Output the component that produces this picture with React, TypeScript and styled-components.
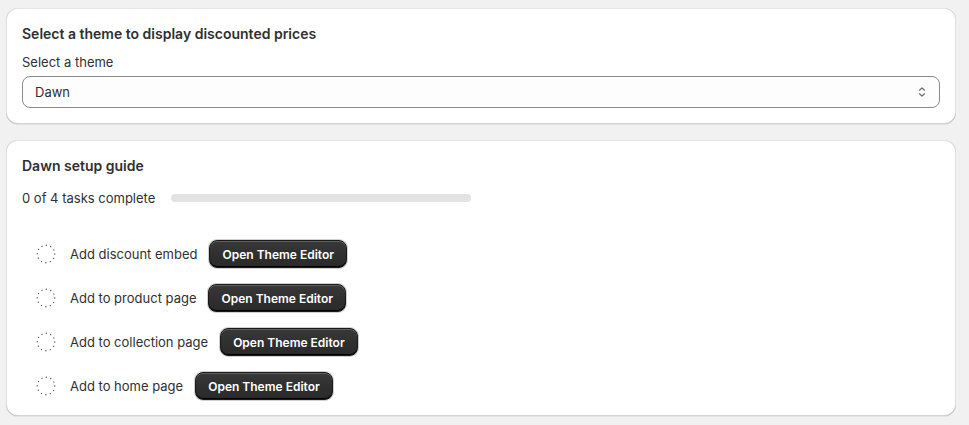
import React from "react";
import styled, { createGlobalStyle } from "styled-components";

const GlobalStyle = createGlobalStyle`
  body {
    margin: 0;
    background: #f1f1f1;
    font-family: Inter, "Noto Sans", sans-serif;
    color: #303030;
    -webkit-font-smoothing: antialiased;
  }
`;

const Page = styled.div`
  display: flex;
  flex-direction: column;
  gap: 16px;
  padding: 8px 13px 8px 6px;
`;

const Card = styled.section`
  background: #ffffff;
  border-radius: 12px;
  padding: 16px;
  box-shadow: 0 1px 0 0 rgba(26, 26, 26, 0.07), 0 1px 0 0 rgba(204, 204, 204, 0.5) inset,
    0 -1px 0 0 rgba(0, 0, 0, 0.17) inset, -1px 0 0 0 rgba(0, 0, 0, 0.13) inset,
    1px 0 0 0 rgba(0, 0, 0, 0.13) inset;
  display: flex;
  flex-direction: column;
`;

const Title = styled.h2<{ $gap: number }>`
  margin: 0 0 ${(p) => p.$gap}px;
  font-size: 14px;
  line-height: 20px;
  font-weight: 600;
`;

const Label = styled.label`
  font-size: 13px;
  line-height: 20px;
  margin-bottom: 4px;
`;

const SelectBox = styled.div`
  height: 32px;
  box-sizing: border-box;
  border: 1px solid #8a8a8a;
  border-radius: 8px;
  background: #fdfdfd;
  display: flex;
  align-items: center;
  justify-content: space-between;
  padding: 0 8px 0 12px;
  font-size: 13px;
`;

const Progress = styled.div`
  display: flex;
  align-items: center;
  gap: 16px;
  font-size: 13px;
  line-height: 20px;
`;

const Track = styled.div`
  width: 300px;
  height: 8px;
  border-radius: 4px;
  background: #e3e3e3;
`;

const TaskList = styled.ul`
  list-style: none;
  margin: 32px 0 0;
  padding: 0 0 0 12px;
  display: flex;
  flex-direction: column;
  gap: 16px;
`;

const Task = styled.li`
  display: flex;
  align-items: center;
  height: 28px;
  font-size: 13px;
`;

const IconBox = styled.span`
  width: 24px;
  height: 24px;
  display: flex;
  align-items: center;
  justify-content: center;
  margin-right: 12px;
`;

const TaskName = styled.span`
  margin-right: 12px;
`;

const DarkButton = styled.button`
  height: 28px;
  padding: 0 12px;
  border: 1px solid #1a1a1a;
  border-radius: 8px;
  background: linear-gradient(180deg, #383838 0%, #303030 50%, #2a2a2a 100%);
  color: #ffffff;
  font-family: inherit;
  font-size: 12px;
  font-weight: 600;
  box-shadow: 0 1px 0 0 rgba(255, 255, 255, 0.2) inset, 0 -1px 0 0 #000 inset,
    0 0 0 1px rgba(120, 120, 120, 0.35);
  cursor: pointer;
`;

const DottedCircle = () => (
  <svg width="20" height="20" viewBox="0 0 20 20">
    <circle
      cx="10"
      cy="10"
      r="8.75"
      fill="none"
      stroke="#5a5a5a"
      strokeWidth="1.4"
      strokeLinecap="round"
      strokeDasharray="0.01 4.58"
    />
  </svg>
);

const Chevrons = () => (
  <svg width="18" height="18" viewBox="0 0 16 16">
    <path
      d="M5.8 6.4 8 4.3l2.2 2.1M5.8 9.6 8 11.7l2.2-2.1"
      fill="none"
      stroke="#6a6a6a"
      strokeWidth="1.1"
      strokeLinecap="round"
      strokeLinejoin="round"
    />
  </svg>
);

const tasks = [
  "Add discount embed",
  "Add to product page",
  "Add to collection page",
  "Add to home page",
];

export default function App() {
  return (
    <>
      <GlobalStyle />
      <Page>
        <Card>
          <Title $gap={8}>Select a theme to display discounted prices</Title>
          <Label>Select a theme</Label>
          <SelectBox>
            <span>Dawn</span>
            <Chevrons />
          </SelectBox>
        </Card>
        <Card>
          <Title $gap={12}>Dawn setup guide</Title>
          <Progress>
            <span>0 of 4 tasks complete</span>
            <Track />
          </Progress>
          <TaskList>
            {tasks.map((t) => (
              <Task key={t}>
                <IconBox>
                  <DottedCircle />
                </IconBox>
                <TaskName>{t}</TaskName>
                <DarkButton>Open Theme Editor</DarkButton>
              </Task>
            ))}
          </TaskList>
        </Card>
      </Page>
    </>
  );
}
